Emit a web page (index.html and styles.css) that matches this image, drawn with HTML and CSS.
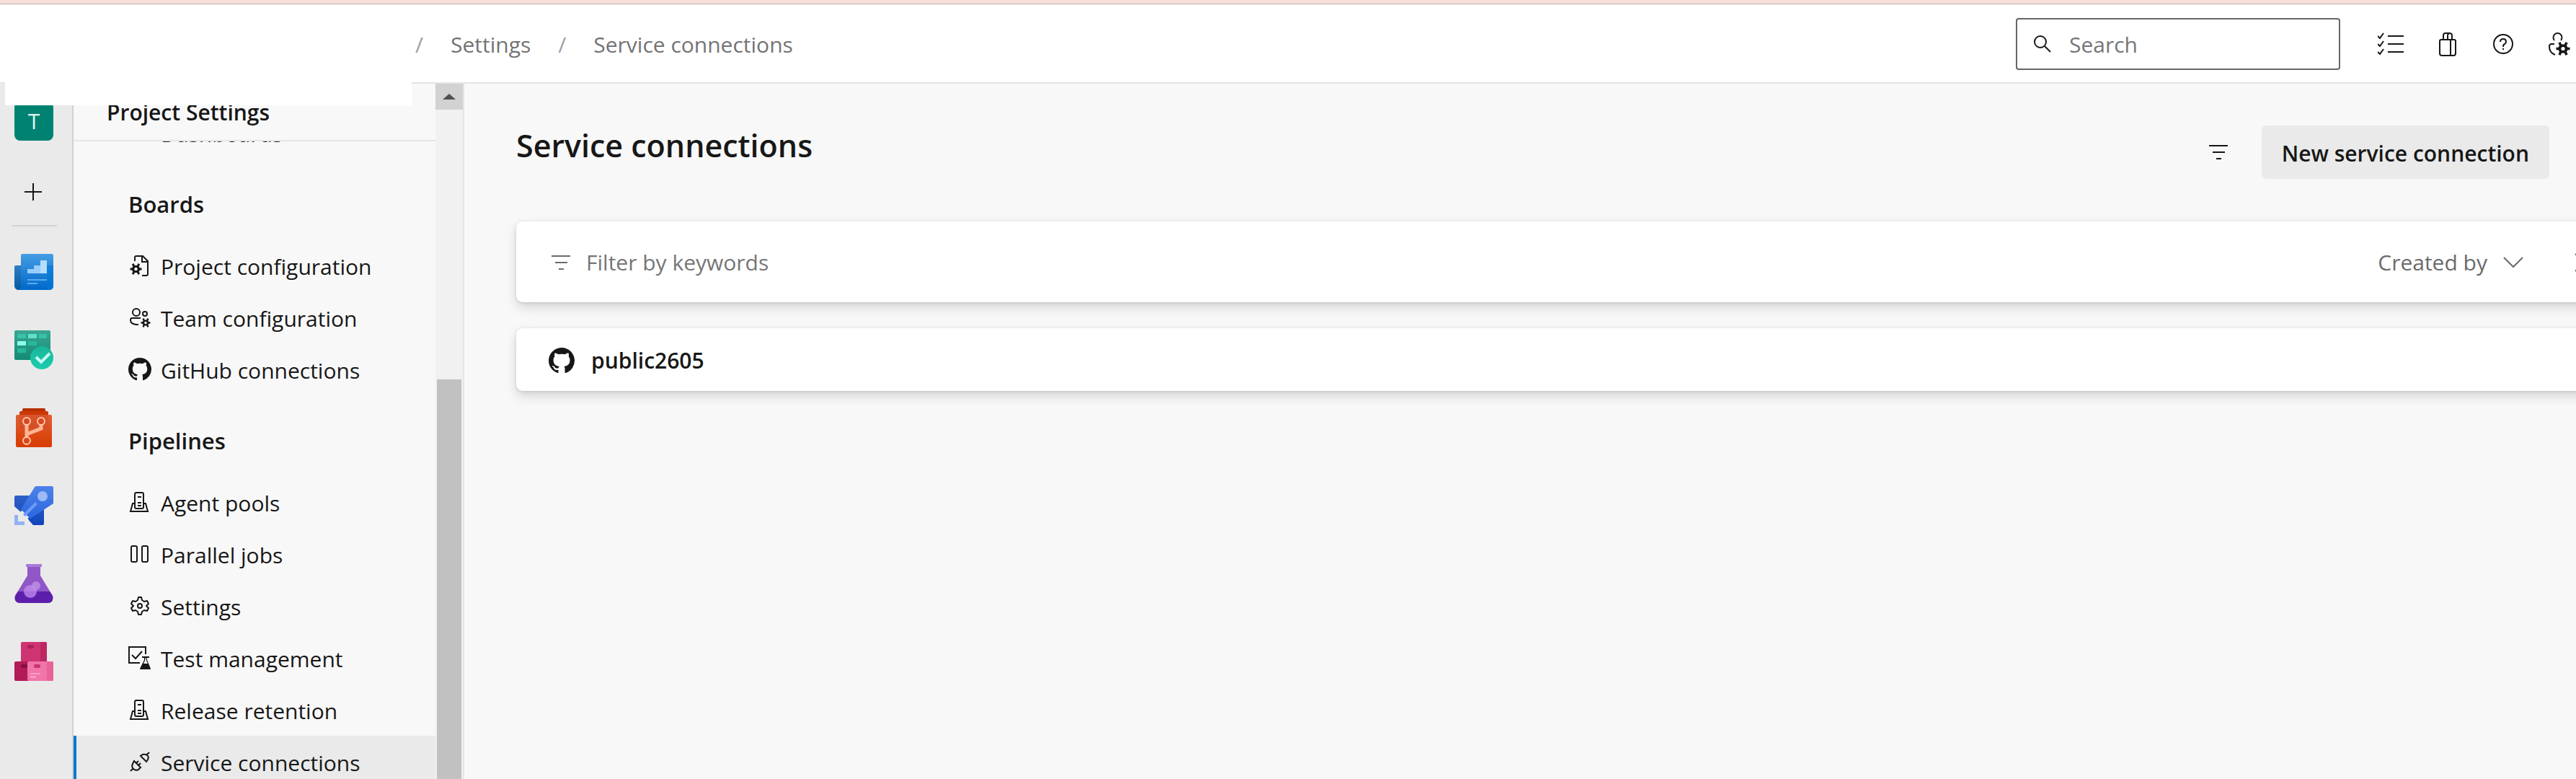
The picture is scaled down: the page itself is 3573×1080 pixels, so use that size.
FILE: index.html
```html
<!DOCTYPE html>
<html lang="en">
<head>
<meta charset="utf-8">
<title>Service connections - Settings</title>
<link rel="stylesheet" href="styles.css">
</head>
<body>
<svg class="defs" aria-hidden="true">
  <defs>
    <symbol id="i-github" viewBox="0 0 16 16"><path fill="currentColor" d="M8 0C3.58 0 0 3.58 0 8c0 3.54 2.29 6.53 5.47 7.59.4.07.55-.17.55-.38 0-.19-.01-.82-.01-1.49-2.01.37-2.53-.49-2.69-.94-.09-.23-.48-.94-.82-1.13-.28-.15-.68-.52-.01-.53.63-.01 1.08.58 1.23.82.72 1.21 1.87.87 2.33.66.07-.52.28-.87.51-1.07-1.78-.2-3.64-.89-3.64-3.95 0-.87.31-1.59.82-2.15-.08-.2-.36-1.02.08-2.12 0 0 .67-.21 2.2.82.64-.18 1.32-.27 2-.27s1.36.09 2 .27c1.53-1.04 2.2-.82 2.2-.82.44 1.1.16 1.92.08 2.12.51.56.82 1.27.82 2.15 0 3.07-1.87 3.75-3.65 3.95.29.25.54.73.54 1.48 0 1.07-.01 1.93-.01 2.2 0 .21.15.46.55.38A8.01 8.01 0 0 0 16 8c0-4.42-3.58-8-8-8z"/></symbol>
    <symbol id="i-cog" viewBox="0 0 16 16"><path fill="currentColor" stroke="none" fill-rule="evenodd" d="M6.400 3 5 0 2.400 1.500 3.800 4.500 2.500 6.500H0v3h2.500l1.300 2-1.400 3L5 16l1.400-3h3.200L11 16l2.600-1.500-1.400-3 1.300-2H16v-3h-2.500l-1.300-2 1.400-3L11 0 9.600 3zM8 5.800a2.200 2.200 0 1 1 0 4.400 2.200 2.200 0 0 1 0-4.400z"/></symbol>
    <symbol id="i-server" viewBox="0 0 32 32"><g fill="none" stroke="currentColor" stroke-width="2"><path d="M9 23V5q0-2 2-2h8q2 0 2 2v18q0 2-2 2h-8q-2 0-2-2zM9 18H6L3 29h24l-3-11h-3M13 9h5M13 17h5M13 21h5"/></g></symbol>
    <symbol id="i-filter" viewBox="0 0 28 24"><path stroke="currentColor" stroke-width="2" d="M1 3h26M6 12h17M11 21h7"/></symbol>
  </defs>
</svg>

<header class="topbar">
  <nav class="crumbs" aria-label="Breadcrumb">
    <span class="slash">/</span>
    <a href="#">Settings</a>
    <span class="slash">/</span>
    <a href="#">Service connections</a>
  </nav>
  <label class="search">
    <svg width="26" height="26" viewBox="0 0 26 26" fill="none" stroke="currentColor" stroke-width="2" aria-hidden="true"><circle cx="10" cy="10" r="8"/><path d="M16 16l8 8"/></svg>
    <input type="search" placeholder="Search" aria-label="Search">
  </label>
  <div class="tools">
    <button aria-label="Work items"><svg width="36" height="36" viewBox="0 0 36 36" fill="none" stroke="currentColor" stroke-width="2"><path d="M14 7h22M14 18h22M14 29h22M0 7l3 3 5-7M0 18l3 3 5-7M0 29l3 3 5-7"/></svg></button>
    <button aria-label="Marketplace"><svg width="36" height="36" viewBox="0 0 36 36" fill="none" stroke="currentColor" stroke-width="2"><path d="M10 12h18q2 0 2 2v17q0 3-3 3H11q-3 0-3-3V14q0-2 2-2zM23 12v22M13 12V6q0-3 3-3h5q4 0 4 3v6M19 12V6q0-2 2-3"/></svg></button>
    <button aria-label="Help"><svg width="36" height="36" viewBox="0 0 36 36" fill="none" stroke="currentColor" stroke-width="2"><circle cx="18" cy="18" r="13"/><path d="M14 15q0-4 4-4t4 4q0 2-2 3t-2 3v1M18 24v2"/></svg></button>
    <button aria-label="User settings"><svg width="36" height="36" viewBox="0 0 36 36" fill="none" stroke="currentColor" stroke-width="2"><path d="M11 13a6 6 0 1 1 9 0M11 18H7q-3 0-3 4 0 8 8 11"/><use href="#i-cog" x="13" y="15" width="20" height="19"/></svg></button>
  </div>
</header>

<div class="body">
  <nav class="rail" aria-label="Project">
    <a class="tile" href="#">T</a>
    <button class="add" aria-label="Add"><svg width="24" height="24" viewBox="0 0 24 24" stroke="currentColor" stroke-width="2"><path d="M12 0v24M0 12h24"/></svg></button>
    <hr>
    <a href="#" aria-label="Overview"><svg width="54" height="54" viewBox="0 0 54 54">
      <defs><linearGradient id="g1" x2="0" y2="1"><stop stop-color="#459de3"/><stop offset="1" stop-color="#0068c9"/></linearGradient><linearGradient id="g2" x2="0" y2="1"><stop stop-color="#2f7fc1"/><stop offset="1" stop-color="#055a9f"/></linearGradient></defs>
      <path fill="url(#g2)" d="M2 18h9v34H5q-5-1-5-6V20q0-2 2-2z"/><path fill="url(#g1)" d="M11 2h41q2 0 2 2v42q0 6-6 6H4q5-1 5-6V4q0-2 2-2z"/><path fill="#0078d9" opacity=".6" d="M45 18h9v28q0 6-6 6-3-2-3-6z"/><path fill="#98cdfb" d="M18 23h9v-5h9v11H18z"/><path fill="#b5ddfd" d="M36 11h9v18h-9z"/><path fill="#58aaf2" d="M18 37h27v2H18zM18 42h14v2H18z"/></svg></a>
    <a href="#" aria-label="Boards"><svg width="54" height="54" viewBox="0 0 54 54">
      <defs><linearGradient id="g3" x2="0" y2="1"><stop stop-color="#3aa792"/><stop offset="1" stop-color="#148a72"/></linearGradient><linearGradient id="g4" x2="0" y2="1"><stop stop-color="#1ab59b"/><stop offset="1" stop-color="#1bcdae"/></linearGradient></defs>
      <rect width="50" height="41" rx="2" fill="url(#g3)"/><path fill="#35c3a9" d="M4 5h12v6H4zM34 5h11v6H34z"/><path fill="#62dfc8" d="M19 5h12v6H19z"/><path fill="#8cfce6" d="M4 15h12v6H4z"/><path fill="#26b89d" d="M19 15h12v6H19zM4 25h12v6H4z"/><circle cx="38" cy="38" r="16" fill="url(#g4)"/><path fill="none" stroke="#c5fdf2" stroke-width="4" d="M30 37l7 7 12-12"/></svg></a>
    <a href="#" aria-label="Repos"><svg width="54" height="54" viewBox="0 0 54 54">
      <defs><linearGradient id="g5" x2="0" y2="1"><stop stop-color="#df6033"/><stop offset="1" stop-color="#d83b01"/></linearGradient></defs>
      <rect x="11" width="32" height="10" rx="2" fill="#b62f02"/><rect x="7" y="4" width="40" height="12" rx="2" fill="#cb3904"/><rect x="2" y="9" width="50" height="45" rx="2" fill="url(#g5)"/><path fill="#d0492a" opacity=".5" d="M7 9h40v20H7z"/><g fill="none" stroke="#ffb594" stroke-width="5"><path d="M17 23v17M37 23v5L17 36"/></g><g fill="#d9481c" stroke="#ffc6ad" stroke-width="2"><circle cx="17" cy="18" r="5"/><circle cx="37" cy="18" r="5"/><circle cx="17" cy="45" r="5"/></g></svg></a>
    <a href="#" aria-label="Pipelines"><svg width="54" height="54" viewBox="0 0 54 54">
      <defs><linearGradient id="g6" x2="0" y2="1"><stop stop-color="#4d82e8"/><stop offset="1" stop-color="#2a65e0"/></linearGradient><linearGradient id="g7" x2="0" y2="1"><stop stop-color="#2f60c8"/><stop offset="1" stop-color="#1145bb"/></linearGradient></defs>
      <path fill="url(#g7)" d="M2 13h26L9 36 0 28V15q0-2 2-2zM41 28v24q0 2-2 2H26l-8-9z"/><path fill="url(#g6)" d="M31 0h21q2 0 2 2v22L22 45 9 32 27 3q1-3 4-3z"/><circle cx="39" cy="14" r="7" fill="#9ebaf5"/><path fill="#eaeaea" d="M9 34l4 4-3 3 5 5 3-2 2 3-3 4-9-8z"/><path fill="#699af5" d="M29 22l3 3-17 17-3-3z"/><path fill="#93b1f4" d="M0 40h5v9h9v5H0z"/></svg></a>
    <a href="#" aria-label="Test Plans"><svg width="54" height="54" viewBox="0 0 54 54">
      <defs><linearGradient id="g8" x2="0" y2="1"><stop stop-color="#9357c6"/><stop offset="1" stop-color="#8b55c8"/></linearGradient></defs>
      <path fill="url(#g8)" d="M18 4h18v12l17 28q2 10-7 10H8Q-1 54 1 44l17-28z"/><path fill="#5c1fab" d="M5 38h44l4 6q2 10-7 10H8Q-1 54 1 44z"/><rect x="16" width="22" height="4" fill="#a97bd9"/><circle cx="22" cy="38" r="9" fill="#c58df0" opacity=".75"/><circle cx="30" cy="30" r="6" fill="#bd93e6" opacity=".8"/></svg></a>
    <a href="#" aria-label="Artifacts"><svg width="54" height="54" viewBox="0 0 54 54">
      <rect x="9" width="36" height="29" rx="2" fill="#cf3472"/><path fill="#bd2863" d="M36 0h7q2 0 2 2v25h-9z"/><rect x="18" y="4" width="9" height="5" rx="2" fill="#ae1f58"/><rect y="27" width="22" height="27" rx="2" fill="#b21a58"/><rect x="18" y="27" width="36" height="27" rx="2" fill="#f075a8"/><path fill="#e8629a" d="M45 27h7q2 0 2 2v23q0 2-2 2h-7z"/><rect x="9" y="31" width="9" height="5" rx="2" fill="#890d40"/><rect x="27" y="31" width="9" height="5" rx="2" fill="#cb3470"/><path fill="#ff9cc4" d="M22 43h14v2H22zM22 47h8v3h-8z"/></svg></a>
  </nav>

  <aside class="side">
    <div class="side-main">
      <div class="side-title">Project Settings</div>
      <div class="side-view">
        <nav class="side-list" aria-label="Project Settings">
          <a href="#"><svg viewBox="0 0 32 32" fill="none" stroke="currentColor" stroke-width="2"><path d="M4 4h24v20H4z"/></svg>Dashboards</a>
          <h2>Boards</h2>
          <a href="#"><svg viewBox="0 0 32 32" fill="none" stroke="currentColor" stroke-width="2"><path d="M9 10V5q0-2 2-2h9l7 7v18q0 2-2 2h-6M19 3v8h8"/><use href="#i-cog" x="2" y="13" width="17" height="16"/></svg>Project configuration</a>
          <a href="#"><svg viewBox="0 0 32 32" fill="none" stroke="currentColor" stroke-width="2"><circle cx="11" cy="9" r="5"/><circle cx="23" cy="11" r="3"/><path d="M17 17H5q-2 0-2 3 0 5 8 6h3"/><use href="#i-cog" x="17" y="17" width="14" height="13"/></svg>Team configuration</a>
          <a href="#"><svg viewBox="0 0 32 32"><use href="#i-github"/></svg>GitHub connections</a>
          <h2>Pipelines</h2>
          <a href="#"><svg><use href="#i-server"/></svg>Agent pools</a>
          <a href="#"><svg viewBox="0 0 32 32" fill="none" stroke="currentColor" stroke-width="2"><rect x="4" y="5" width="8" height="22" rx="2"/><rect x="19" y="5" width="8" height="22" rx="2"/></svg>Parallel jobs</a>
          <a href="#"><svg viewBox="0 0 32 32" fill="none" stroke="currentColor" stroke-width="2" stroke-linejoin="round"><path d="M13 8l1-4h4l1 4 3 2 4-1 2 4-3 3 3 3-2 4-4-1-3 2-1 4h-4l-1-4-3-2-4 1-2-4 3-3-3-3 2-4 4 1z"/><circle cx="16" cy="16" r="3"/></svg>Settings</a>
          <a href="#"><svg viewBox="0 0 32 32" fill="none" stroke="currentColor" stroke-width="2"><path d="M24 11V1H1v22h15M5 12l5 5 9-10M19 15h10"/><path fill="currentColor" stroke="none" d="M20 15h2v4l-6 12q0 1 1 1h13q1 0 1-1l-5-12v-4h2v-1h-8zM24 16h1v4l2 4h-6l2-4z" fill-rule="evenodd"/></svg>Test management</a>
          <a href="#"><svg><use href="#i-server"/></svg>Release retention</a>
          <a href="#" class="on" aria-current="page"><svg viewBox="0 0 32 32" fill="none" stroke="currentColor" stroke-width="2"><path d="M3 29l4-4M25 7l4-4M8 15l9 9-3 3q-4 2-7-1t-1-7zM11 18l3-3M14 21l3-3M17 8l8 8 2-3q2-4-1-6t-6-1z"/></svg>Service connections</a>
        </nav>
      </div>
    </div>
    <div class="bar" aria-hidden="true">
      <svg class="bar-up" viewBox="0 0 38 36"><path fill="#505050" d="M10 22l9-8 9 8z"/></svg>
      <div class="bar-thumb"></div>
    </div>
  </aside>

  <main class="main">
    <div class="head">
      <h1>Service connections</h1>
      <button class="icon-btn" aria-label="Filter"><svg width="28" height="24"><use href="#i-filter"/></svg></button>
      <button class="new">New service connection</button>
    </div>
    <div class="cards">
      <div class="card filter">
        <label class="keywords"><svg width="28" height="24" aria-hidden="true"><use href="#i-filter"/></svg><input type="text" placeholder="Filter by keywords" aria-label="Filter by keywords"></label>
        <button class="created">Created by<svg width="28" height="20" viewBox="0 0 28 20" fill="none" stroke="currentColor" stroke-width="2"><path d="M1 3l13 13L27 3"/></svg></button>
        <button class="clear" aria-label="Clear filters"><svg width="26" height="26" viewBox="0 0 26 26" fill="none" stroke="currentColor" stroke-width="2"><path d="M1 1l24 24M25 1L1 25"/></svg></button>
      </div>
      <a class="card row" href="#"><svg width="36" height="36"><use href="#i-github"/></svg>public2605</a>
    </div>
  </main>
</div>
<div class="cover"></div>
</body>
</html>
```

FILE: styles.css
```css
* { box-sizing: border-box; }

body {
  margin: 0;
  height: 100vh;
  display: flex;
  flex-direction: column;
  overflow: hidden;
  position: relative;
  background: #f8f8f8;
  color: #171717;
  font: 30px/40px "Segoe UI", "Open Sans", sans-serif;
}

a { color: inherit; text-decoration: none; }
button, input { font: inherit; color: inherit; border: 0; padding: 0; background: none; }
svg { display: block; flex: none; }
h1, h2 { margin: 0; font-weight: 600; }
.defs { position: absolute; width: 0; height: 0; }

/* top bar */
.topbar {
  flex: none;
  height: 116px;
  display: flex;
  align-items: center;
  background: #fff;
  border-top: 5px solid #f5e0da;
  border-bottom: 2px solid #e5e5e5;
  box-shadow: inset 0 1px #c8afac;
  padding: 2px 5px 0 0;
}
.crumbs {
  flex: 1;
  display: flex;
  gap: 38px;
  padding: 2px 0 0 576px;
  color: #737373;
}
.slash { color: #a0a0a0; }
.search {
  width: 450px;
  height: 72px;
  display: flex;
  align-items: center;
  gap: 24px;
  padding: 0 22px;
  border: 2px solid #666;
  border-radius: 4px;
}
.search input { flex: 1; min-width: 0; outline: 0; padding-top: 2px; }
input::placeholder { color: #767676; opacity: 1; }
.tools { display: flex; gap: 42px; margin-left: 52px; }

.body { flex: 1; min-height: 0; display: flex; }

/* product rail */
.rail {
  flex: none;
  width: 102px;
  display: flex;
  flex-direction: column;
  align-items: flex-start;
  gap: 54px;
  padding: 25px 0 0 20px;
  background: #eaeaea;
  border-right: 2px solid #d2d2d2;
}
.tile {
  width: 54px;
  height: 54px;
  border-radius: 8px;
  background: #008272;
  color: #e0f2ef;
  text-align: center;
  line-height: 54px;
}
.add { margin: 5px 0 -20px 14px; }
.rail hr {
  width: 62px;
  height: 2px;
  margin: 0 0 -18px -3px;
  border: 0;
  background: #d2d2d2;
}

/* settings navigation */
.side { flex: none; width: 542px; display: flex; border-right: 2px solid #e5e5e5; }
.side-main { flex: 1; min-width: 0; display: flex; flex-direction: column; }
.side-title {
  flex: none;
  height: 80px;
  padding: 20px 46px 0;
  border-bottom: 2px solid #e5e5e5;
  font-weight: 600;
}
.side-view { flex: 1; min-height: 0; overflow: hidden; }
.side-list { margin-top: -48px; }
.side-list h2 {
  height: 112px;
  padding: 43px 76px 0;
  font-size: 31px;
}
.side-list a {
  height: 72px;
  display: flex;
  align-items: center;
  gap: 13px;
  padding: 4px 0 0 76px;
}
.side-list a svg { width: 32px; height: 32px; margin-bottom: 4px; }
.side-list .on {
  padding-left: 72px;
  border-left: 4px solid #0078d4;
  background: #eaeaea;
}
.bar { flex: none; width: 38px; display: flex; flex-direction: column; background: #f1f1f1; }
.bar-up { height: 36px; background: #d2d2d2; }
.bar-thumb { flex: 1; margin: 374px 2px 0; background: #c1c1c1; }

/* content */
.main { flex: 1; min-width: 0; overflow: hidden; padding: 58px 37px 0 72px; }
.head { display: flex; align-items: center; }
.head h1 { flex: 1; font-size: 43px; line-height: 56px; padding-bottom: 18px; }
.icon-btn { margin-right: 46px; }
.new {
  height: 74px;
  padding: 3px 28px 0;
  border-radius: 6px;
  background: #eaeaea;
  font-weight: 600;
}
.cards { display: flex; flex-direction: column; gap: 36px; margin: 59px -109px 0 0; }
.card {
  display: flex;
  align-items: center;
  background: #fff;
  border-radius: 9px;
  box-shadow: 0 7px 16px rgba(0, 0, 0, .14), 0 1px 4px rgba(0, 0, 0, .12);
}
.filter { height: 112px; padding: 2px 48px 0; color: #6b6b6b; }
.keywords { flex: 1; display: flex; align-items: center; gap: 21px; }
.keywords input { flex: 1; outline: 0; }
.created { display: flex; align-items: center; gap: 22px; margin-right: 71px; }
.row { height: 87px; padding: 2px 45px 0; gap: 23px; font-weight: 600; }

.cover {
  position: absolute;
  left: 7px;
  top: 110px;
  width: 564px;
  height: 36px;
  background: #fff;
}
```
